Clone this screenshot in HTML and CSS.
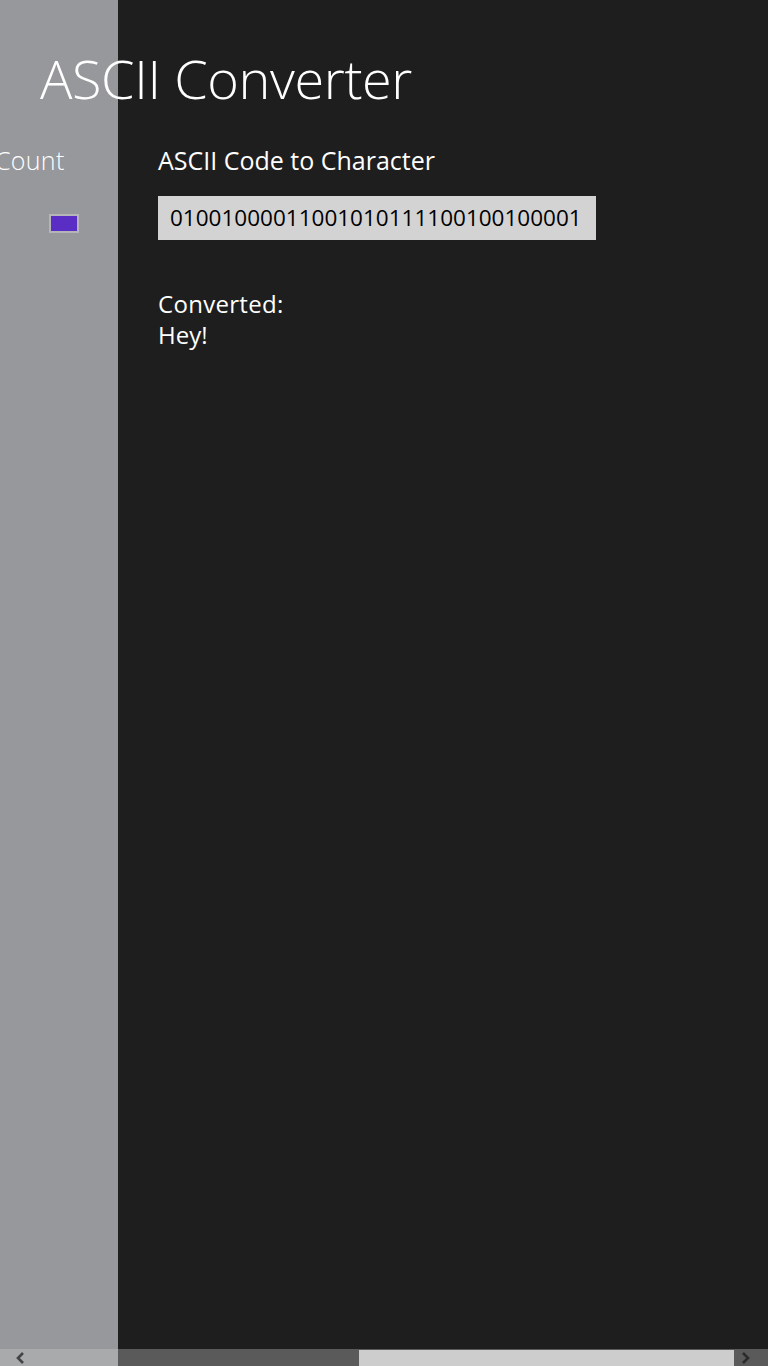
FILE: index.html
```html
<!DOCTYPE html>
<html lang="en">
<head>
<meta charset="utf-8">
<title>ASCII Converter</title>
<link rel="stylesheet" href="styles.css">
</head>
<body>
<div class="app">
  <div class="side-bg"></div>
  <h1 class="title">ASCII Converter</h1>
  <section class="side">
    <div class="side-label">Count</div>
    <div class="swatch-row"><span class="swatch"></span></div>
  </section>
  <section class="main">
    <div class="label">ASCII Code to Character</div>
    <div class="input">01001000011001010111100100100001</div>
    <div class="result">
      <div class="result-label">Converted:</div>
      <div class="result-value">Hey!</div>
    </div>
  </section>
  <div class="hscroll">
    <div class="sb-btn sb-left">
      <svg width="10" height="12" viewBox="0 0 10 12"><path d="M8 1 L3 6 L8 11" fill="none" stroke="#444446" stroke-width="2.6"/></svg>
    </div>
    <div class="sb-track">
      <div class="sb-thumb"></div>
    </div>
    <div class="sb-btn sb-right">
      <svg width="10" height="12" viewBox="0 0 10 12"><path d="M2 1 L7 6 L2 11" fill="none" stroke="#2c2c2c" stroke-width="2.6"/></svg>
    </div>
  </div>
</div>
</body>
</html>
```

FILE: styles.css
```css
html, body {
  margin: 0;
  padding: 0;
  background: #1e1e1e;
  overflow: hidden;
}
.app {
  display: grid;
  grid-template-columns: 118px 1fr;
  grid-template-rows: auto 1fr 17px;
  height: 1366px;
  width: 768px;
  font-family: "Open Sans", "Noto Sans", sans-serif;
  color: #ffffff;
}
.side-bg {
  grid-column: 1;
  grid-row: 1 / 4;
  background: #97989c;
}
.title {
  grid-column: 1 / 3;
  grid-row: 1;
  margin: 46px 0 0 40px;
  font-size: 54px;
  font-weight: 300;
  line-height: 64px;
  letter-spacing: -0.4px;
  z-index: 1;
}
.side {
  grid-column: 1;
  grid-row: 2;
  overflow: hidden;
  padding-top: 34px;
  z-index: 1;
}
.side-label {
  margin-left: -5px;
  font-size: 25px;
  font-weight: 300;
  line-height: 32px;
  letter-spacing: 0.3px;
  white-space: nowrap;
}
.swatch-row {
  display: flex;
  padding: 38px 0 0 49px;
}
.swatch {
  width: 26px;
  height: 15px;
  border: 2px solid #b5b5b7;
  background: #5a2ec4;
}
.main {
  grid-column: 2;
  grid-row: 2;
  padding: 34px 0 0 40px;
  z-index: 1;
}
.label {
  font-size: 25px;
  font-weight: 400;
  line-height: 32px;
}
.input {
  margin-top: 20px;
  width: 438px;
  height: 44px;
  box-sizing: border-box;
  padding: 0 0 0 12px;
  background: #d3d3d3;
  color: #000000;
  font-size: 22.5px;
  line-height: 44px;
  white-space: nowrap;
}
.result {
  margin-top: 48px;
  font-size: 24px;
  line-height: 31px;
}
.result-label {
  letter-spacing: 0.3px;
}
.hscroll {
  grid-column: 1 / 3;
  grid-row: 3;
  display: flex;
  background: rgba(203, 203, 203, 0.35);
  z-index: 2;
}
.sb-btn {
  display: flex;
  align-items: center;
}
.sb-left {
  width: 40px;
  padding-left: 15px;
  box-sizing: border-box;
}
.sb-right {
  width: 34px;
  padding-left: 7px;
  box-sizing: border-box;
}
.sb-track {
  flex: 1;
  display: flex;
  padding-left: 319px;
}
.sb-thumb {
  width: 375px;
  margin: 1px 0 0 0;
  background: #cdcdcd;
}
```
